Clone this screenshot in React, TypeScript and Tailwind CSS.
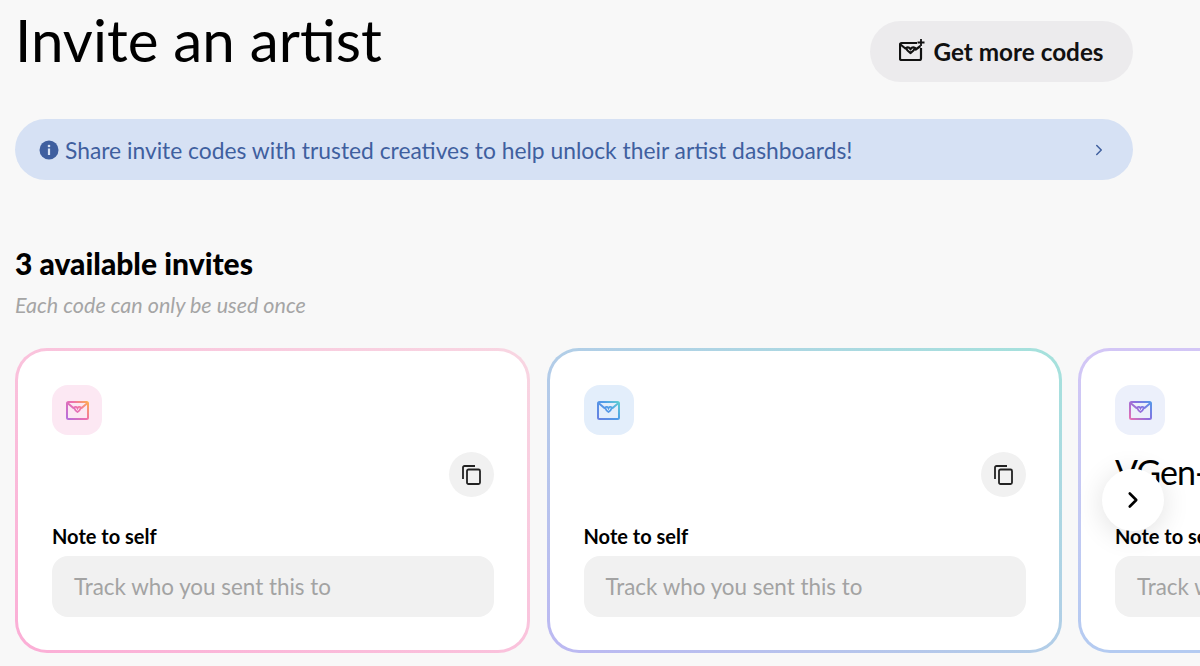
import React from 'react';
import { ChevronRight } from 'lucide-react';

const FONT = "font-['Lato','Noto_Sans',sans-serif]";

interface Invite {
  id: string;
  code?: string;
  border: string;
  tile: string;
  stops: [string, string, string];
}

const invites: Invite[] = [
  { id: 'pink', border: 'bg-linear-to-tr from-[#fbaed6] to-[#f8d6e2]', tile: 'bg-[#fce8f3]', stops: ['#b06ee0', '#ee6fae', '#ffb347'] },
  { id: 'blue', border: 'bg-linear-to-tr from-[#bcb8f2] to-[#a5e2dc]', tile: 'bg-[#e3eefb]', stops: ['#6a7fe0', '#4f9be8', '#5fd4d0'] },
  { id: 'violet', code: 'VGen-', border: 'bg-linear-to-b from-[#d3c6f6] to-[#b4cbf1]', tile: 'bg-[#ecf0fb]', stops: ['#ee6fb0', '#8a6fe0', '#4f9be8'] },
];

function MailIcon({ id, stops }: { id: string; stops: [string, string, string] }) {
  return (
    <svg width="23" height="19" viewBox="0 0 23 19" fill="none">
      <defs>
        <linearGradient id={id} x1="0" y1="19" x2="23" y2="0" gradientUnits="userSpaceOnUse">
          <stop stopColor={stops[0]} />
          <stop offset="0.55" stopColor={stops[1]} />
          <stop offset="1" stopColor={stops[2]} />
        </linearGradient>
      </defs>
      <rect x="1" y="1" width="21" height="17" rx="1.5" stroke={`url(#${id})`} strokeWidth="2" />
      <path d="M1.500 2 L8 7.500 M21.500 2 L15 7.500" stroke={`url(#${id})`} strokeWidth="2" />
      <path d="M8 6.500 Q10.200 5 11.500 7.300 Q12.800 5 15 6.500 Q14 9.500 11.500 11 Q9 9.500 8 6.500Z" stroke={`url(#${id})`} strokeWidth="1.800" />
    </svg>
  );
}

function CopyIcon() {
  return (
    <svg width="19" height="20" viewBox="0 0 19 20" fill="none" stroke="#222" strokeWidth="1.800">
      <rect x="5" y="4.500" width="13" height="14.500" rx="1.500" />
      <path d="M1 14V2.500A1.500 1.500 0 0 1 2.500 1H13" />
    </svg>
  );
}

function InviteCard({ invite }: { invite: Invite }) {
  return (
    <div className={`w-[515px] h-[305px] shrink-0 rounded-[32px] p-[3px] ${invite.border}`}>
      <div className="h-full rounded-[29px] bg-white pl-[34px] pr-[33px] pt-[34px]">
        <div className={`w-[50px] h-[50px] rounded-2xl flex items-center justify-center ${invite.tile}`}>
          <MailIcon id={`mail-${invite.id}`} stops={invite.stops} />
        </div>
        <div className="h-[89px] flex items-start justify-between">
          {invite.code ? (
            <span className="mt-[14px] text-[34px] leading-[46px] tracking-[-1px] text-black">{invite.code}</span>
          ) : (
            <span />
          )}
          <button className="mt-[17px] w-[45px] h-[45px] rounded-full bg-[#f1f1f1] flex items-center justify-center">
            <CopyIcon />
          </button>
        </div>
        <label className="block text-[20px] leading-[24px] font-bold text-black">Note to self</label>
        <div className="mt-[8px] h-[61px] rounded-2xl bg-[#f1f1f1] px-[22px] flex items-center text-[22.400px] text-[#a3a3a3] whitespace-nowrap">
          Track who you sent this to
        </div>
      </div>
    </div>
  );
}

export default function App() {
  return (
    <div className={`relative h-[666px] overflow-hidden bg-[#f8f8f8] ${FONT}`}>
      <div className="w-[1133px] pl-[15px]">
        <div className="h-[119px] flex items-start justify-between">
          <h1 className="mt-[3px] text-[58.300px] leading-[72px] font-normal text-black">Invite an artist</h1>
          <button className="mt-[21px] w-[263px] h-[61px] rounded-full bg-[#ecebed] flex items-center justify-center gap-[8px] text-[24.300px] font-bold text-[#111]">
            <svg width="26" height="22" viewBox="0 0 26 22" fill="none" stroke="#111" strokeWidth="2.200" className="-mt-[3px]">
              <path d="M18 4H2.500A1.500 1.500 0 0 0 1 5.500v14A1.500 1.500 0 0 0 2.500 21h18a1.500 1.500 0 0 0 1.500-1.500V9" />
              <path d="M1.500 5.500 7 10M21.500 7 16 11" />
              <path d="M7 9q2.500-1.500 4.500 1 2-2.500 4.500-1-1 3-4.500 5-3.500-2-4.500-5Z" />
              <path d="M22 0v7M18.500 3.500h7" strokeWidth="1.800" />
            </svg>
            <span className="mt-[1px]">Get more codes</span>
          </button>
        </div>
        <div className="h-[61px] rounded-full bg-[#d6e1f4] pl-[24px] pr-[25px] flex items-center justify-between text-[#3f5f9f]">
          <div className="flex items-center gap-[6px] text-[22.800px]">
            <svg width="20" height="20" viewBox="0 0 20 20">
              <circle cx="10" cy="10" r="9.500" fill="#3f5f9f" />
              <circle cx="10" cy="6" r="1.300" fill="#d6e1f4" />
              <rect x="8.900" y="8.500" width="2.200" height="6.500" fill="#d6e1f4" />
            </svg>
            <span className="mt-[1px]">Share invite codes with trusted creatives to help unlock their artist dashboards!</span>
          </div>
          <ChevronRight size={18} />
        </div>
        <h2 className="mt-[64px] text-[30px] leading-[38px] font-black text-black">3 available invites</h2>
        <p className="mt-[9px] text-[21.500px] leading-[28px] italic text-[#a5a5a5]">Each code can only be used once</p>
      </div>
      <div className="mt-[29px] pl-[15px] flex gap-[16.500px]">
        {invites.map(invite => (
          <InviteCard key={invite.id} invite={invite} />
        ))}
      </div>
      <button className="absolute left-[1102px] top-[469px] w-[62px] h-[62px] rounded-full bg-white shadow-[0_4px_28px_rgba(0,0,0,0.12)] flex items-center justify-center">
        <ChevronRight size={26} strokeWidth={2.400} className="text-black" />
      </button>
    </div>
  );
}
